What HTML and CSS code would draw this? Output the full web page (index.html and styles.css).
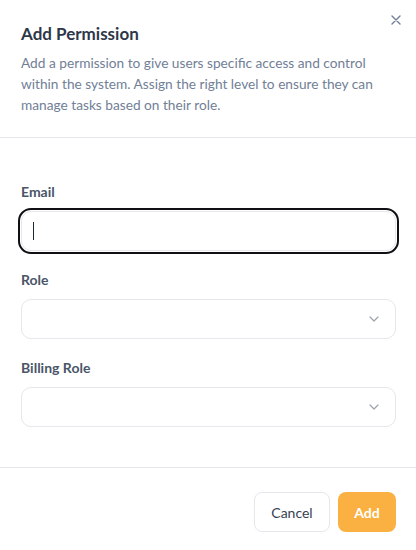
FILE: index.html
```html
<!DOCTYPE html>
<html lang="en">
<head>
<meta charset="utf-8">
<title>Add Permission</title>
<link rel="stylesheet" href="styles.css">
</head>
<body>
<div class="modal">
  <header class="modal-header">
    <h2 class="modal-title">Add Permission</h2>
    <p class="modal-desc">Add a permission to give users specific access and control within the system. Assign the right level to ensure they can manage tasks based on their role.</p>
    <button class="close-btn" type="button" aria-label="Close">
      <svg width="10" height="10" viewBox="0 0 10 10" fill="none" stroke="currentColor" stroke-width="1.4" stroke-linecap="round"><path d="M1 1L9 9M9 1L1 9"/></svg>
    </button>
  </header>
  <div class="modal-body">
    <div class="field">
      <label class="field-label" for="email">Email</label>
      <div class="input-wrap">
        <input id="email" class="input is-focused" type="email">
        <span class="caret"></span>
      </div>
    </div>
    <div class="field">
      <label class="field-label">Role</label>
      <div class="select">
        <svg class="chevron" width="10" height="6" viewBox="0 0 10 6" fill="none" stroke="currentColor" stroke-width="1.2" stroke-linecap="round" stroke-linejoin="round"><path d="M1 1L5 5L9 1"/></svg>
      </div>
    </div>
    <div class="field">
      <label class="field-label">Billing Role</label>
      <div class="select">
        <svg class="chevron" width="10" height="6" viewBox="0 0 10 6" fill="none" stroke="currentColor" stroke-width="1.2" stroke-linecap="round" stroke-linejoin="round"><path d="M1 1L5 5L9 1"/></svg>
      </div>
    </div>
  </div>
  <footer class="modal-footer">
    <button class="btn btn-secondary" type="button">Cancel</button>
    <button class="btn btn-primary" type="button">Add</button>
  </footer>
</div>
</body>
</html>
```
FILE: styles.css
```css
* { box-sizing: border-box; }
html, body { margin: 0; padding: 0; background: #fff; }
body { font-family: Lato, "Noto Sans", sans-serif; color: #2d3748; }

.modal { width: 416px; height: 550px; background: #fff; display: flex; flex-direction: column; }

.modal-header { position: relative; padding: 20px 20px 22px 21px; border-bottom: 1px solid #e5e7eb; }
.modal-title { margin: 0; font-size: 17px; line-height: 28px; font-weight: 700; color: #2d3748; }
.modal-desc { margin: 4px 0 0; font-size: 13.7px; line-height: 21px; color: #718096; }
.close-btn { position: absolute; top: 15px; right: 15px; width: 10px; height: 10px; padding: 0; border: 0; background: none; color: #718096; display: flex; }

.modal-body { padding: 44px 20px 40px 21px; display: flex; flex-direction: column; gap: 19px; border-bottom: 1px solid #e5e7eb; }
.field { display: flex; flex-direction: column; gap: 9px; }
.field-label { font-size: 14px; line-height: 20px; font-weight: 700; color: #4a5568; }
.input-wrap { position: relative; }
.input { display: block; width: 100%; height: 40px; border: 1px solid #e5e7eb; border-radius: 10px; padding: 0 12px; font: inherit; font-size: 14px; background: #fff; caret-color: transparent; outline: none; }
.input.is-focused { outline: 2px solid #0f0f14; outline-offset: 1px; }
.caret { position: absolute; left: 12px; top: 11px; width: 1px; height: 18px; background: #1f2937; }
.select { height: 40px; border: 1px solid #e5e7eb; border-radius: 10px; display: flex; align-items: center; justify-content: flex-end; padding-right: 16px; }
.chevron { color: #9ca3af; }

.modal-footer { padding: 24px 20px 17px; display: flex; justify-content: flex-end; gap: 8px; }
.btn { height: 40px; border-radius: 8px; font-family: inherit; font-size: 14px; padding: 0; cursor: pointer; }
.btn-secondary { width: 76px; background: #fff; border: 1px solid #e5e7eb; color: #374151; }
.btn-primary { width: 58px; background: #fbb042; border: 0; color: #fff; font-weight: 700; }
```
